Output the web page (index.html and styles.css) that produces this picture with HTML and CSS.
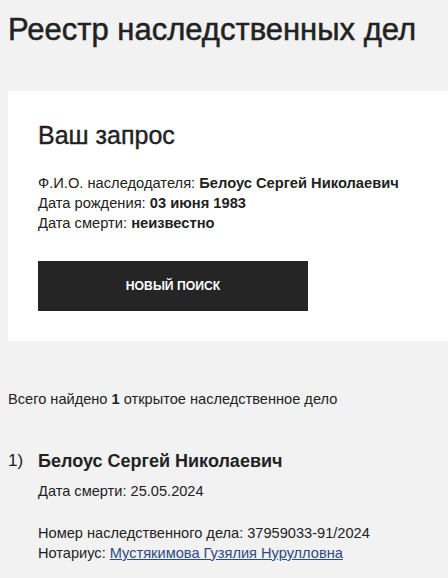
FILE: index.html
```html
<!DOCTYPE html>
<html lang="ru">
<head>
<meta charset="utf-8">
<title>Реестр наследственных дел</title>
<link rel="stylesheet" href="styles.css">
</head>
<body>
<h1 class="page-title">Реестр наследственных дел</h1>
<section class="card">
  <h2 class="card-title">Ваш запрос</h2>
  <div class="query">
    <div>Ф.И.О. наследодателя: <b>Белоус Сергей Николаевич</b></div>
    <div>Дата рождения: <b>03 июня 1983</b></div>
    <div>Дата смерти: <b>неизвестно</b></div>
  </div>
  <button class="btn">НОВЫЙ ПОИСК</button>
</section>
<p class="total">Всего найдено <b>1</b> открытое наследственное дело</p>
<ol class="results">
  <li class="result">
    <span class="num">1)</span>
    <div class="result-body">
      <div class="result-name">Белоус Сергей Николаевич</div>
      <div class="result-line">Дата смерти: 25.05.2024</div>
      <div class="result-case">
        <div>Номер наследственного дела: 37959033-91/2024</div>
        <div>Нотариус: <a class="link" href="#">Мустякимова Гузялия Нурулловна</a></div>
      </div>
    </div>
  </li>
</ol>
</body>
</html>
```
FILE: styles.css
```css
html, body {
  margin: 0;
  padding: 0;
}
body {
  background: #f2f2f2;
  color: #222;
  font-family: "Liberation Sans", Arial, sans-serif;
  font-size: 14.6px;
  line-height: 20px;
  padding-left: 8px;
  overflow: hidden;
}
.page-title {
  margin: 0;
  padding-top: 12px;
  font-size: 31px;
  line-height: 36px;
  font-weight: normal;
  -webkit-text-stroke: 0.5px #222;
}
.card {
  margin-top: 43px;
  background: #fff;
  padding: 30px;
  height: 250px;
  box-sizing: border-box;
}
.card-title {
  margin: 0;
  font-size: 25px;
  line-height: 28px;
  font-weight: normal;
  -webkit-text-stroke: 0.4px #222;
}
.query {
  margin-top: 24px;
  font-size: 14.7px;
}
.query b {
  font-weight: bold;
}
.btn {
  display: block;
  margin-top: 28px;
  width: 270px;
  height: 50px;
  border: 0;
  padding: 0;
  background: #252525;
  color: #fff;
  font-family: "Liberation Sans", Arial, sans-serif;
  font-weight: bold;
  font-size: 12.2px;
}
.total {
  margin: 0;
  padding-top: 48px;
}
.results {
  list-style: none;
  margin: 0;
  padding: 0;
  padding-top: 40px;
}
.result {
  display: flex;
}
.num {
  width: 30px;
  font-size: 17px;
  line-height: 24px;
}
.result-name {
  font-size: 18px;
  line-height: 24px;
  font-weight: bold;
}
.result-line {
  margin-top: 8px;
}
.result-case {
  margin-top: 22px;
}
.link {
  color: #2a4a85;
  text-decoration: underline;
}
```
